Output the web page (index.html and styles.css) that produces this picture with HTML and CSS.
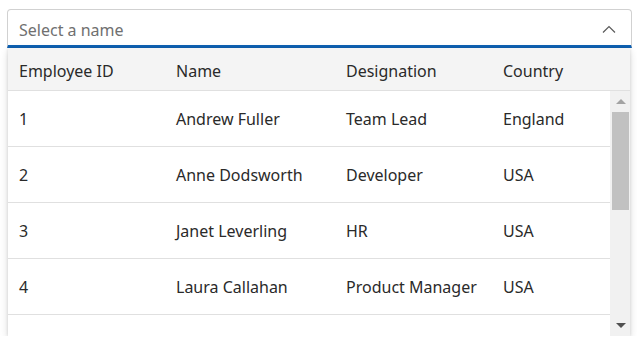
FILE: index.html
```html
<!DOCTYPE html>
<html>
<head>
<meta charset="utf-8">
<link rel="stylesheet" href="styles.css">
</head>
<body>
<div class="combo">
  <div class="input">
    <span class="placeholder">Select a name</span>
    <svg class="chevron" width="14" height="8" viewBox="0 0 14 8"><path d="M1 7.5 L7 1.5 L13 7.5" fill="none" stroke="#5a5a5a" stroke-width="1.2"/></svg>
  </div>
  <div class="popup">
    <div class="header">
      <div class="cell">Employee ID</div>
      <div class="cell">Name</div>
      <div class="cell">Designation</div>
      <div class="cell">Country</div>
    </div>
    <div class="body">
      <div class="rows">
        <div class="row"><div class="cell">1</div><div class="cell">Andrew Fuller</div><div class="cell">Team Lead</div><div class="cell">England</div></div>
        <div class="row"><div class="cell">2</div><div class="cell">Anne Dodsworth</div><div class="cell">Developer</div><div class="cell">USA</div></div>
        <div class="row"><div class="cell">3</div><div class="cell">Janet Leverling</div><div class="cell">HR</div><div class="cell">USA</div></div>
        <div class="row"><div class="cell">4</div><div class="cell">Laura Callahan</div><div class="cell">Product Manager</div><div class="cell">USA</div></div>
        <div class="row partial"></div>
      </div>
      <div class="scrollbar">
        <div class="btn"><span class="tri up"></span></div>
        <div class="thumb"></div>
        <div class="track"></div>
        <div class="btn down-btn"><span class="tri down"></span></div>
      </div>
    </div>
  </div>
</div>
</body>
</html>
```

FILE: styles.css
```css
html, body {
  margin: 0;
  padding: 0;
  background: #ffffff;
}
body {
  font-family: "Noto Sans", "Open Sans", sans-serif;
  font-size: 16px;
  color: #2a2a2a;
}
.combo {
  margin: 9px 0 0 7px;
  width: 625px;
}
.input {
  box-sizing: border-box;
  height: 39px;
  border: 1px solid #d1d1d1;
  border-bottom: 3px solid #0f62b4;
  border-radius: 4px 4px 0 0;
  display: flex;
  align-items: center;
  justify-content: space-between;
  padding: 4px 15px 0 11px;
}
.placeholder {
  color: #707070;
}
.chevron {
  display: block;
  margin-top: -1px;
}
.popup {
  margin-left: 1px;
  width: 622px;
  height: 288px;
  background: #ffffff;
  box-shadow: 0 3px 8px rgba(0, 0, 0, 0.14), 0 0 3px rgba(0, 0, 0, 0.12);
  display: flex;
  flex-direction: column;
}
.header, .row {
  display: grid;
  grid-template-columns: 157px 170px 157px 1fr;
  align-items: center;
}
.header {
  box-sizing: border-box;
  height: 43px;
  background: #f4f4f4;
  border-bottom: 1px solid #e0e0e0;
  padding: 3px 20px 0 0;
}
.cell {
  padding-left: 11px;
  white-space: nowrap;
}
.body {
  flex: 1;
  display: flex;
  overflow: hidden;
}
.rows {
  flex: 1;
}
.row {
  box-sizing: border-box;
  height: 56px;
  border-bottom: 1px solid #e0e0e0;
  padding-top: 1px;
}
.row.partial {
  border-bottom: none;
  height: 21px;
}
.scrollbar {
  width: 20px;
  background: #f1f1f1;
  display: flex;
  flex-direction: column;
}
.btn {
  height: 21px;
  display: flex;
  align-items: center;
  justify-content: center;
  padding-left: 1px;
}
.down-btn {
  height: 22px;
}
.thumb {
  height: 98px;
  margin: 0 1px 0 2px;
  background: #c1c1c1;
}
.track {
  flex: 1;
}
.tri {
  width: 0;
  height: 0;
  border-left: 5px solid transparent;
  border-right: 5px solid transparent;
}
.tri.up {
  border-bottom: 5px solid #a3a3a3;
}
.tri.down {
  border-top: 5px solid #505050;
}
```
